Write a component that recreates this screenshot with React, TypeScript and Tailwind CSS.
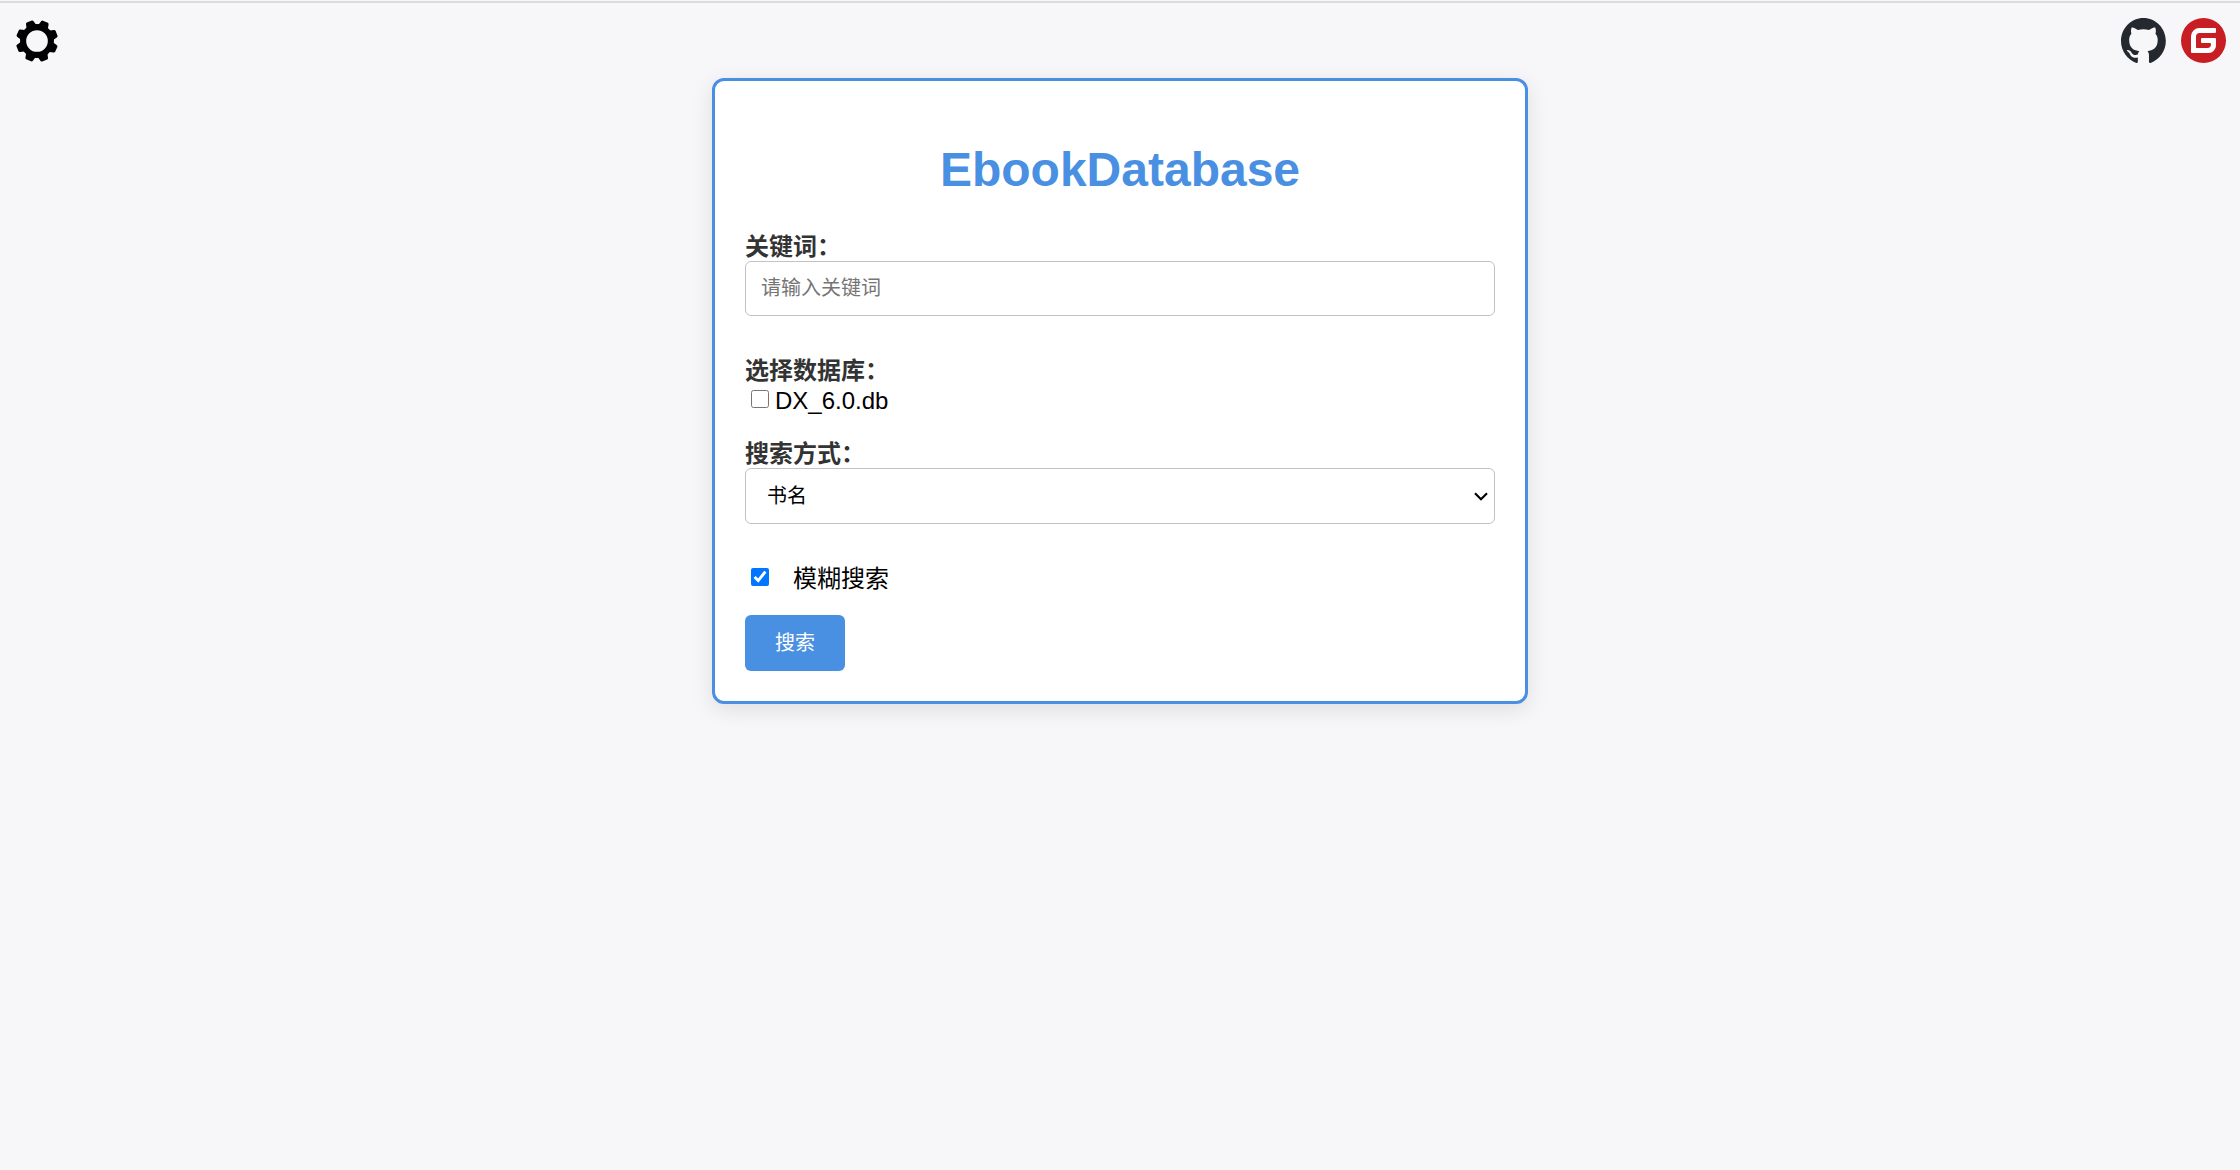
import { useState } from "react";

const TEETH = [0, 45, 90, 135, 180, 225, 270, 315];

function GearIcon() {
  return (
    <svg viewBox="-62 -62 124 124" className="size-[42px]" aria-hidden="true">
      <circle r="41" fill="none" stroke="#000" strokeWidth="18" />
      {TEETH.map((angle) => (
        <path
          key={angle}
          transform={`rotate(${angle + 23.5})`}
          d="M-16 -42 L-12 -58 Q-11 -62 -8 -62 L8 -62 Q11 -62 12 -58 L16 -42 Z"
        />
      ))}
    </svg>
  );
}

function GithubIcon() {
  return (
    <svg viewBox="0 0 98 96" preserveAspectRatio="none" className="size-[45px]" aria-hidden="true">
      <path
        fill="#24292f"
        fillRule="evenodd"
        clipRule="evenodd"
        d="M48.854 0C21.839 0 0 22 0 49.217c0 21.756 13.993 40.172 33.405 46.69 2.427.49 3.316-1.059 3.316-2.362 0-1.141-.08-5.052-.08-9.127-13.59 2.934-16.42-5.867-16.42-5.867-2.184-5.704-5.42-7.17-5.42-7.17-4.448-3.015.324-3.015.324-3.015 4.934.326 7.523 5.052 7.523 5.052 4.367 7.496 11.404 5.378 14.235 4.074.404-3.178 1.699-5.378 3.074-6.6-10.839-1.141-22.243-5.378-22.243-24.283 0-5.378 1.94-9.778 5.014-13.2-.485-1.222-2.184-6.275.486-13.038 0 0 4.125-1.304 13.426 5.052a46.97 46.97 0 0 1 12.214-1.63c4.125 0 8.33.571 12.213 1.63 9.302-6.356 13.427-5.052 13.427-5.052 2.67 6.763.97 11.816.485 13.038 3.155 3.422 5.015 7.822 5.015 13.2 0 18.905-11.404 23.06-22.324 24.283 1.78 1.548 3.316 4.481 3.316 9.126 0 6.6-.08 11.897-.08 13.526 0 1.304.89 2.853 3.316 2.364 19.412-6.52 33.405-24.935 33.405-46.691C97.707 22 75.788 0 48.854 0z"
      />
    </svg>
  );
}

function GiteeIcon() {
  return (
    <svg viewBox="0 0 24 24" className="size-[45px]" aria-hidden="true">
      <path
        fill="#c71d23"
        d="M11.984 0A12 12 0 0 0 0 12a12 12 0 0 0 12 12 12 12 0 0 0 12-12A12 12 0 0 0 12 0a12 12 0 0 0-.016 0z"
      />
      <path
        fill="#fff"
        d="M18.074 5.333c.328 0 .593.266.592.593v1.482a.594.594 0 0 1-.593.592H9.777c-.982 0-1.778.796-1.778 1.778v5.63c0 .327.266.592.593.592h5.63c.982 0 1.778-.796 1.778-1.778v-.296a.593.593 0 0 0-.592-.593h-4.15a.592.592 0 0 1-.592-.592v-1.482a.593.593 0 0 1 .593-.592h6.815c.327 0 .593.265.593.592v3.408a4 4 0 0 1-4 4H5.926a.593.593 0 0 1-.593-.593V9.778a4.444 4.444 0 0 1 4.445-4.444h8.296z"
      />
    </svg>
  );
}

export default function App() {
  const [keyword, setKeyword] = useState("");
  const [useDx, setUseDx] = useState(false);
  const [fuzzy, setFuzzy] = useState(true);

  return (
    <div className="min-h-screen bg-[#f7f7fa] pt-px font-['Liberation_Sans','Noto_Sans_CJK_SC',sans-serif] text-2xl leading-[30px] text-black">
      <header className="flex items-center justify-between border-t-2 border-[#dadcde] pt-[15px] pr-3.5 pl-4">
        <button type="button" aria-label="设置" className="cursor-pointer">
          <GearIcon />
        </button>
        <nav className="flex gap-[15px]">
          <a href="#github" aria-label="GitHub">
            <GithubIcon />
          </a>
          <a href="#gitee" aria-label="Gitee">
            <GiteeIcon />
          </a>
        </nav>
      </header>

      <main className="mx-auto mt-[15px] w-full max-w-[816px] rounded-xl border-3 border-[#4a90e2] bg-white p-[30px] shadow-[0_6px_22px_rgba(0,0,0,0.1)]">
        <h1 className="mt-[31px] text-center text-5xl leading-[56px] font-bold text-[#4a90e2]">EbookDatabase</h1>

        <form className="mt-[35px]" onSubmit={(e) => e.preventDefault()}>
          <label htmlFor="keyword" className="block leading-7 font-bold text-[#333]">
            关键词：
          </label>
          <input
            id="keyword"
            type="text"
            value={keyword}
            onChange={(e) => setKeyword(e.target.value)}
            placeholder="请输入关键词"
            className="block h-[55px] w-full rounded-md border border-[#bdc3c7] px-[15px] text-xl placeholder:text-[#757575]"
          />

          <fieldset className="mt-[41px]">
            <legend className="leading-7 font-bold text-[#333]">选择数据库：</legend>
            <label className="flex items-center pl-1.5 leading-8">
              <input
                type="checkbox"
                checked={useDx}
                onChange={(e) => setUseDx(e.target.checked)}
                className="mr-1.5 mb-1 size-[18px]"
              />
              DX_6.0.db
            </label>
          </fieldset>

          <label htmlFor="mode" className="mt-[23px] block leading-7 font-bold text-[#333]">
            搜索方式：
          </label>
          <div className="relative">
            <select
              id="mode"
              className="block h-14 w-full appearance-none rounded-md border border-[#bdc3c7] bg-white pr-8 pl-[21px] text-xl"
            >
              <option>书名</option>
            </select>
            <svg
              viewBox="0 0 14 9"
              className="pointer-events-none absolute inset-y-0 right-[7px] my-auto h-[9px] w-3.5"
              aria-hidden="true"
            >
              <path d="M1 1.2 L7 7.2 L13 1.2" fill="none" stroke="#000" strokeWidth="2.2" />
            </svg>
          </div>

          <label className="mt-10 flex items-center pl-1.5">
            <input
              type="checkbox"
              checked={fuzzy}
              onChange={(e) => setFuzzy(e.target.checked)}
              className="mr-6 mb-1 size-[18px]"
            />
            模糊搜索
          </label>

          <button
            type="submit"
            className="mt-[21px] block h-14 cursor-pointer rounded-md bg-[#4a90e2] px-[30px] text-xl text-white"
          >
            搜索
          </button>
        </form>
      </main>
    </div>
  );
}
